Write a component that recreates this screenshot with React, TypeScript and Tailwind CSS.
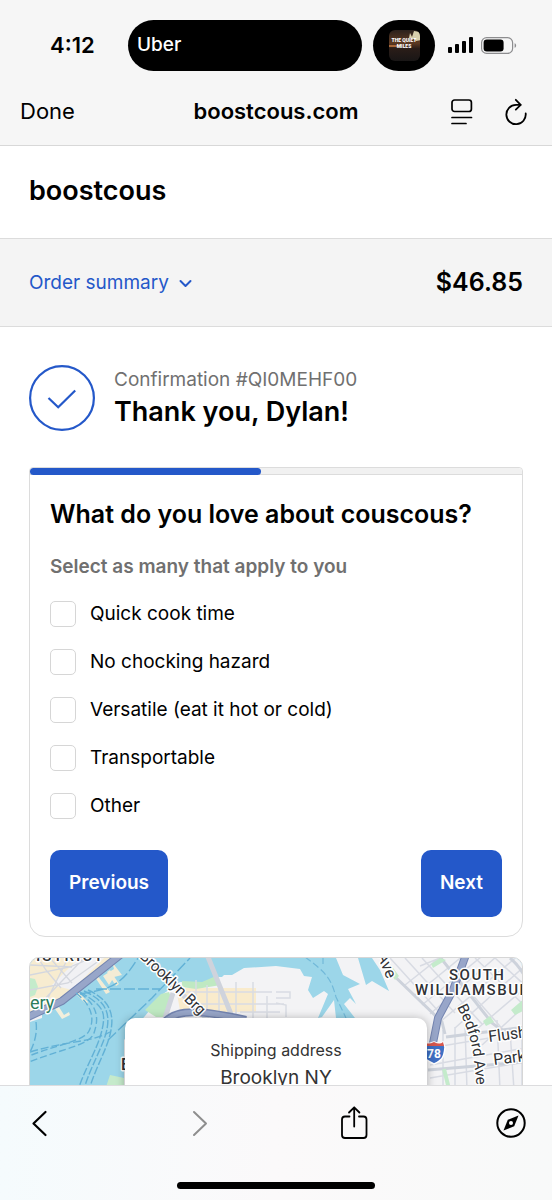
const options = [
  "Quick cook time",
  "No chocking hazard",
  "Versatile (eat it hot or cold)",
  "Transportable",
  "Other",
];

function StatusBar() {
  return (
    <div className="flex h-20 items-center justify-center pt-[10px]">
      <div className="w-[128px] pl-[50px] text-[22px] font-semibold">4:12</div>
      <div className="flex h-[51px] w-[234px] items-center rounded-full bg-black px-[9px] text-[19px] font-medium text-white">
        Uber
      </div>
      <div className="ml-[11px] flex h-[51px] w-[62px] items-center justify-center rounded-full bg-black">
        <svg width="31" height="31" viewBox="0 0 31 31" role="img" aria-label="The Quiet Miles album art">
          <defs>
            <linearGradient id="art" x1="0" y1="0" x2="0" y2="1">
              <stop offset="0" stopColor="#2b211c" />
              <stop offset="0.42" stopColor="#5e3a22" />
              <stop offset="0.6" stopColor="#2a1d18" />
              <stop offset="1" stopColor="#191616" />
            </linearGradient>
            <clipPath id="artClip">
              <rect width="31" height="31" rx="6" />
            </clipPath>
          </defs>
          <g clipPath="url(#artClip)">
            <rect width="31" height="31" fill="url(#art)" />
            <path d="M20 8l1-5 2 4 2-6 6 1 1 8-5 1-3-3z" fill="#d9cfac" />
            <path d="M0 15h12l-4 2H0z" fill="#a8683a" />
            <text x="15" y="12" textAnchor="middle" fontSize="5" fontWeight="900" fill="#fff" fontFamily="Roboto, sans-serif">THE QUIET</text>
            <text x="15" y="18" textAnchor="middle" fontSize="5" fontWeight="900" fill="#fff" fontFamily="Roboto, sans-serif">MILES</text>
          </g>
        </svg>
      </div>
      <div className="flex w-[117px] items-center gap-2 pl-[13px]">
        <svg width="25" height="16" viewBox="0 0 25 16" aria-hidden="true">
          <rect x="0" y="10" width="4" height="6" rx="1" />
          <rect x="7" y="7" width="4" height="9" rx="1" />
          <rect x="14" y="4" width="4" height="12" rx="1" />
          <rect x="21" y="0" width="4" height="16" rx="1" />
        </svg>
        <svg width="36" height="17" viewBox="0 0 36 17" aria-hidden="true">
          <rect x="0.6" y="0.6" width="31" height="15.8" rx="5" fill="none" stroke="#8d8d8f" strokeWidth="1.2" />
          <rect x="2.6" y="2.6" width="20" height="11.8" rx="3.2" />
          <path d="M33.6 6.2c2 .6 2 4 0 4.600z" fill="#8d8d8f" />
        </svg>
      </div>
    </div>
  );
}

function NavBar() {
  return (
    <div className="grid h-[65px] grid-cols-[1fr_auto_1fr] items-center pb-[2px]">
      <div className="pl-5">
        <button className="text-[22px]">Done</button>
      </div>
      <div className="text-[22px] font-semibold">boostcous.com</div>
      <div className="flex items-center justify-end gap-[30px] pr-[24px]">
        <button aria-label="Reader view">
          <svg width="24" height="28" viewBox="0 0 24 28" fill="none" stroke="#000" strokeWidth="1.7" strokeLinecap="round">
            <rect x="2" y="2" width="19.400" height="11.500" rx="2.500" />
            <path d="M2 19.500h19.500M2 25.500h14" />
          </svg>
        </button>
        <button aria-label="Reload">
          <svg width="24" height="28" viewBox="0 0 24 28" fill="none" stroke="#000" strokeWidth="1.800" strokeLinecap="round" strokeLinejoin="round">
            <path d="M21.700 15.500a9.700 9.700 0 1 1-9.700-8.700h4.500" />
            <path d="M11.800 1.800l4.900 5-4.900 4.800" />
          </svg>
        </button>
      </div>
    </div>
  );
}

function Survey() {
  return (
    <section className="mt-[36px] rounded-t-[4px] rounded-b-2xl border border-[#dcdcdc] pb-[19px]">
      <div className="h-[7px] rounded-t-[4px] border-b border-[#dcdcdc] bg-[#f1f1f1]">
        <div className="h-[7px] w-[47%] rounded-full bg-[#2458c9]" />
      </div>
      <form className="px-[20px]" onSubmit={(e) => e.preventDefault()}>
        <h2 className="mt-[21px] text-[25px] leading-9 font-semibold">What do you love about couscous?</h2>
        <fieldset className="mt-[21px]">
          <legend className="text-[19px] leading-7 font-semibold text-[#707070]">Select as many that apply to you</legend>
          <div className="mt-[9px]">
            {options.map((option) => (
              <label key={option} className="flex h-12 items-center gap-[14px] text-[19px]">
                <input
                  type="checkbox"
                  className="size-[26px] shrink-0 appearance-none rounded-[5px] border border-[#d6d6d6] bg-white checked:border-[#2458c9] checked:bg-[#2458c9]"
                />
                {option}
              </label>
            ))}
          </div>
        </fieldset>
        <div className="mt-[20px] flex justify-between text-[19px] font-semibold text-white">
          <button type="button" className="h-[67px] rounded-[10px] bg-[#2458c9] px-[19px]">Previous</button>
          <button type="submit" className="h-[67px] rounded-[10px] bg-[#2458c9] px-[19px]">Next</button>
        </div>
      </form>
    </section>
  );
}

function MapArt() {
  return (
    <svg
      className="h-full w-full"
      viewBox="30 958 492 198"
      preserveAspectRatio="xMidYMin slice"
      fontFamily="Roboto, sans-serif"
      role="img"
      aria-label="Map of Brooklyn"
    >
      <defs>
        <path id="bedford" d="M457 1007Q470 1032 473 1053T478 1110" />
      </defs>
      <rect x="0" y="900" width="600" height="300" fill="#9cd6e9" />

      {/* Lower Manhattan */}
      <path d="M0 900H150V957H118L62 1004 30 1020H0z" fill="#f7ecd0" />
      <path d="M72 990L105 957H80L52 985z" fill="#f1f1f4" />
      <path d="M30 978l5 1 3 8-3 8-5 2z" fill="#c4ebcb" />
      <g fill="none" stroke="#d4d7de" strokeWidth="1.300">
        <path d="M30 975l40-8 24-10M30 990l38-7 32-23M38 958l8 12 15 18M50 958l22 25M68 958l-20 40M84 958l-46 48M30 965l42 2" />
      </g>
      <path d="M103 976l11-7-2-7 10 13-8 2-5 8zM97 975l13 17-4 2-11-17zM110 970l9 14-3 2-9-14zM77 991l11 11-2 2-11-11z" fill="#f4ecd5" />
      <path d="M55 1009l7 10 8-4-1-3-5 3-5-8z" fill="#f2efdc" />
      <path d="M30 1018l12-5v5l-12 4z" fill="#f1f1f4" />
      <path d="M124 952L62 1001 28 1017" fill="none" stroke="#7485b1" strokeWidth="8" />
      <path d="M124 952L62 1001 28 1017" fill="none" stroke="#98a6c9" strokeWidth="6" />

      {/* Ferry routes */}
      <g fill="none" stroke="#62b1d6" strokeWidth="1.400">
        <path d="M96 989h64M80 994c28-5 40-6 58-36M108 1040l44-42 38-40" strokeDasharray="11 3" />
        <path d="M76 993c18 14 18 28 13 38s-33 14-60 25M80 993c20 14 18 28 14 40s-32 16-65 29" strokeDasharray="7 3" />
        <path d="M84 991c22 10 26 22 23 38-3 16-16 36-23 60M88 990c22 10 26 24 23 40-3 18-15 36-22 60M80 992c24 14 26 20 22 38s-17 38-24 60" strokeDasharray="8 2" />
        <path d="M30 1052c40-12 60-9 80-20M36 1022q2 14-6 30" strokeDasharray="8 3" />
      </g>

      {/* Brooklyn */}
      <path
        d="M145 1016L163 994 180 982 204 983 216 977 222 977 224 975 232 975 244 968 276 966 300 969 304 976 312 977 308 990 313 998 324 991 328 994 318 1018 322 1017 334 1000 336 1018H355L344 1004 350 998 356 1004 348 989 360 984 343 975 336 958 358 958 366 985 372 981 389 991 380 970 372 958H540V1200H124V1040z"
        fill="#f3f3f5"
      />
      <path d="M176 988h80v24h-50l-25 4z" fill="#f9ebcc" />
      <path d="M145 1010l16-16 8-2 3 8-6 17h-10z" fill="#bfe9c2" />
      <path d="M182 981l20 1 14-6 5 9-25 4-14-2z" fill="#bfe9c2" />
      <path d="M105 1090l5-15 14 3v12z" fill="#c5eacb" />
      <g fill="none" stroke="#d9dce3" strokeWidth="1.500">
        <path d="M196 1018v-38M207 1018v-33M219 1018v-38M236 1018v-36M253 1018v-36M267 1018v-22M180 992h92M186 1004h98M240 1012h40M276 992h14v6h-14M276 1003l10 2v12" />
      </g>
      <path d="M208 957l25 62M165 1018l8-25" fill="none" stroke="#cfd3dc" strokeWidth="5" />
      <path d="M136 948L208 1020" fill="none" stroke="#cfd3dc" strokeWidth="5" />
      <path d="M166 1021c12-13 40-10 80-1" fill="none" stroke="#7485b1" strokeWidth="8" />
      <path d="M166 1021c12-13 40-10 80-1" fill="none" stroke="#98a6c9" strokeWidth="5" />
      <path d="M305 957c22 16 26 22 31 40l10 21M323 957v10" fill="none" stroke="#72b9d9" strokeWidth="1.200" strokeDasharray="7 3" />

      {/* Williamsburg street grid */}
      <g fill="none" stroke="#d8dbe3" strokeWidth="1.500">
        <path d="M405 985l38-30M415 995l49-40M422 1005l59-48M430 1014l66-57M440 1022l80-68M455 1028l72-64M440 958l-20 8M470 1035l56-48M482 1045l46-42" />
        <path d="M390 958l50 55M405 958l50 55M422 958l60 66M440 958l66 75M475 958l52 50M495 958l34 31" />
        <path d="M430 1078l95-16M430 1048l95-16M443 1030v60M455 1027v64M465 1025l2 65M497 1020l3 70M510 1030l4 60M522 1030v60M430 1065l95-17" />
      </g>
      <g fill="none" stroke="#cdd2db" strokeWidth="3">
        <path d="M388 970l54 52 3 12M440 957l52 66 20 15M428 1070l96-8M446 1037l80-10M510 958q12 10 17 24" />
      </g>
      <path d="M391 965l8 11-4 4-7-10zM431 964l9-6 6 2-13 8zM483 1021l7-5 4 6-8 4zM511 1010l14-12v12l-10 5z" fill="#c4ebcb" />
      <path d="M444 1069l5 20" stroke="#c4ebcb" strokeWidth="4" />
      <path d="M467 952L453 990 438 1018 432 1048" fill="none" stroke="#7485b1" strokeWidth="8" />
      <path d="M467 952L453 990 438 1018 432 1048" fill="none" stroke="#98a6c9" strokeWidth="6" />

      {/* Interstate shield */}
      <path d="M422 1042q6 3 12 0 6 3 9 0l2 5c-1 11-3 13-11 17-8-4-14-7-13-17z" fill="#3f6fc4" stroke="#fff" strokeWidth="1.500" />
      <path d="M422 1042q6 3 12 0 6 3 9 0l1 4h-22z" fill="#d7574d" />
      <text x="434" y="1058" textAnchor="middle" fontSize="12" fontWeight="700" fill="#fff">78</text>

      {/* Place names */}
      <g fill="#303236" stroke="#fff" strokeWidth="3" strokeLinejoin="round" paintOrder="stroke" fontSize="16">
        <text x="36" y="961" fontSize="15" fontWeight="500" letterSpacing="2">ISTRICT</text>
        <text x="30" y="1009" fill="#2c7c5b" fontSize="18">ery</text>
        <text x="121" y="1070" fontWeight="500">E</text>
        <text transform="translate(139 957) rotate(44)" fontSize="15">Brooklyn Brg</text>
        <text transform="translate(377 955) rotate(68)">Ave</text>
        <text x="449" y="980" fontSize="15" fontWeight="500" letterSpacing="1.5">SOUTH</text>
        <text x="415" y="995" fontSize="15" fontWeight="500" letterSpacing="1.5">WILLIAMSBURG</text>
        <text fontSize="15">
          <textPath href="#bedford">Bedford Ave</textPath>
        </text>
        <text transform="translate(489 1042) rotate(-7)">Flushing Ave</text>
        <text transform="translate(494 1065) rotate(-7)">Park Ave</text>
      </g>
    </svg>
  );
}

function Toolbar() {
  return (
    <footer className="h-[115px] shrink-0 border-t border-[#dcdcde] bg-linear-to-r from-[#f5fbfd] via-[#fbf9fa] to-[#f8f9f9]">
      <div className="flex h-[74px] items-center justify-between pr-[26px] pl-6">
        <button aria-label="Back">
          <svg width="30" height="34" viewBox="0 0 30 34" fill="none" stroke="#000" strokeWidth="2.200" strokeLinecap="round" strokeLinejoin="round">
            <path d="M21.500 6L9.500 17.500 21.500 29" />
          </svg>
        </button>
        <button aria-label="Forward" disabled>
          <svg width="30" height="34" viewBox="0 0 30 34" fill="none" stroke="#8e8e8e" strokeWidth="2" strokeLinecap="round" strokeLinejoin="round">
            <path d="M13 6L25 17.500 13 29" />
          </svg>
        </button>
        <button aria-label="Share">
          <svg width="30" height="34" viewBox="0 0 30 34" fill="none" stroke="#000" strokeWidth="1.800" strokeLinecap="round" strokeLinejoin="round">
            <path d="M10.500 10.500H6a3 3 0 0 0-3 3V29a3 3 0 0 0 3 3h18.500a3 3 0 0 0 3-3V13.500a3 3 0 0 0-3-3H20M15.200 20.500V1.500M10 6.500l5.200-5.200 5.200 5.200" />
          </svg>
        </button>
        <button aria-label="Open in browser">
          <svg width="30" height="34" viewBox="0 0 30 34" fill="none">
            <circle cx="15" cy="17" r="13.700" stroke="#000" strokeWidth="2" />
            <path d="M22.500 9.500L18.200 20.200 7.500 24.500 11.800 13.800z" fill="#000" />
            <circle cx="15" cy="17" r="2" fill="#fff" />
          </svg>
        </button>
      </div>
      <div className="mx-auto mt-[22px] h-[7px] w-[198px] rounded-full bg-black" />
    </footer>
  );
}

export default function App() {
  return (
    <div className="flex h-screen flex-col bg-white font-['Inter',sans-serif] text-black">
      <header className="shrink-0 border-b border-[#d8d8d8] bg-[#f6f6f6]">
        <StatusBar />
        <NavBar />
      </header>

      <main className="min-h-0 flex-1 overflow-y-auto [scrollbar-width:none]">
        <div className="flex h-[92px] items-center px-[29px] pb-[2px]">
          <h1 className="text-[27px] font-semibold">boostcous</h1>
        </div>
        <div className="flex h-[89px] items-center justify-between border-y border-[#dcdcdc] bg-[#f4f4f4] px-[29px] pt-px">
          <button className="flex items-center gap-[10px] text-[19px] text-[#2458c9]">
            Order summary
            <svg width="13" height="9" viewBox="0 0 13 9" fill="none" stroke="currentColor" strokeWidth="2" strokeLinecap="round" strokeLinejoin="round">
              <path d="M1.500 2L6.500 7l5-5" />
            </svg>
          </button>
          <span className="text-[25px] font-semibold">$46.85</span>
        </div>

        <div className="px-[29px] pt-[38px]">
          <div className="flex items-center gap-[19px]">
            <svg className="shrink-0" width="66" height="66" viewBox="0 0 66 66" fill="none" stroke="#2458c9" strokeWidth="2.200">
              <circle cx="33" cy="33" r="31.900" />
              <path d="M19.500 33L29.200 42.300 46.200 25.500" />
            </svg>
            <div>
              <p className="text-[19px] leading-7 text-[#707070]">Confirmation #QI0MEHF00</p>
              <h2 className="text-[27px] leading-9 font-semibold">Thank you, Dylan!</h2>
            </div>
          </div>

          <Survey />

          <section className="relative mt-[20px] h-[200px] overflow-hidden rounded-[10px] border border-[#d6d6d6]">
            <MapArt />
            <div className="absolute inset-x-[95px] top-[60px] rounded-[10px] bg-white py-[18px] text-center text-[#333] shadow-[0_1px_10px_rgba(0,0,0,0.3)]">
              <p className="text-[16px] leading-7">Shipping address</p>
              <p className="text-[19px] leading-7">Brooklyn NY</p>
            </div>
          </section>
        </div>
      </main>

      <Toolbar />
    </div>
  );
}
